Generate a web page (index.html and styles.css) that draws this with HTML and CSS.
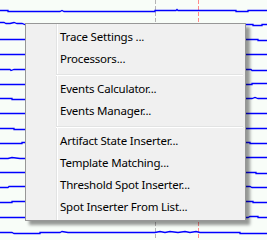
FILE: index.html
```html
<!DOCTYPE html>
<html>
<head>
<meta charset="utf-8">
<link rel="stylesheet" href="styles.css">
</head>
<body>
<div class="canvas">
  <svg class="traces" width="267" height="240" viewBox="0 0 267 240">
    <g class="markers">
      <line class="mk-gray" x1="155.5" y1="0" x2="155.5" y2="240"/>
      <line class="mk-red" x1="198.5" y1="0" x2="198.5" y2="240"/>
    </g>
    <g class="lines">
      <polyline points="0,10.5 8,10.5 8,11.5 60,11.5 62,10.5 64,11.5 155,11.5 155,10.5 176,10.5 177,9.5 178,10.5 236,10.5 236,11.5 248,11.5 248,10.5 267,10.5"/>
      <polyline points="0,22.5 4,22.5 6,23.5 10,23.5 14,22.5 17,23.5 22,23.5 25,24.5 253,24.5 253,25.5 262,25.5 262,24.5 267,24.5"/>
      <polyline points="0,39.5 25,39.5 250,39.5 258,39.5 258,40.5 267,40.5"/>
      <polyline points="0,54.5 25,54.5 267,54.5"/>
      <polyline points="0,69.5 10,69.5 11,70.5 14,69.5 25,69.5 251,69.5 252,70.5 267,70.5"/>
      <polyline points="0,84.5 25,84.5 245,84.5 252,84.5 252,83.5 267,83.5"/>
      <polyline points="0,98.5 12,98.5 12,99.5 25,99.5 252,98.5 255,97.5 258,98.5 267,98.5"/>
      <polyline points="0,113.5 25,113.5 267,113.5"/>
      <polyline points="0,128.5 14,128.5 14,129.5 25,129.5 258,128.5 267,128.5"/>
      <polyline points="0,143.5 22,143.5 22,142.5 25,142.5 250,142.5 250,143.5 267,143.5"/>
      <polyline points="0,158.5 8,158.5 12,157.5 20,158.5 25,158.5 252,157.5 267,157.5"/>
      <polyline points="0,172.5 25,172.5 256,172.5 256,173.5 267,173.5"/>
      <polyline points="0,187.5 8,187.5 9,186.5 25,186.5 250,186.5 252,187.5 267,187.5"/>
      <polyline points="0,202.5 12,202.5 12,201.5 25,201.5 253,201.5 253,202.5 267,202.5"/>
      <polyline points="0,217.5 25,217.5 248,217.5 250,216.5 258,216.5 258,217.5 267,217.5"/>
      <polyline points="0,232.5 12,232.5 14,233.5 40,233.5 40,232.5 60,232.5 62,231.5 68,232.5 155,232.5 160,231.5 165,232.5 170,231.5 178,232.5 185,231.5 190,232.5 196,231.5 200,232.5 220,232.5 240,232.5 240,233.5 267,233.5"/>
    </g>
  </svg>

  <div class="menu">
    <div class="item">Trace Settings ...</div>
    <div class="item">Processors...</div>
    <div class="sep"></div>
    <div class="item">Events Calculator...</div>
    <div class="item">Events Manager...</div>
    <div class="sep"></div>
    <div class="item">Artifact State Inserter...</div>
    <div class="item">Template Matching...</div>
    <div class="item">Threshold Spot Inserter...</div>
    <div class="item">Spot Inserter From List...</div>
  </div>
</div>
</body>
</html>
```

FILE: styles.css
```css
html, body {
  margin: 0;
  padding: 0;
}

body {
  width: 267px;
  height: 240px;
  overflow: hidden;
  background: #f8fdf8;
}

.canvas {
  position: relative;
  width: 267px;
  height: 240px;
}

.traces {
  position: absolute;
  left: 0;
  top: 0;
  display: block;
}

.lines polyline {
  fill: none;
  stroke: #0000ff;
  stroke-width: 1.3;
}

.mk-gray {
  stroke: #b4b4b4;
  stroke-width: 1;
  stroke-dasharray: 4 2;
}

.mk-red {
  stroke: #ff8a8a;
  stroke-width: 1;
  stroke-dasharray: 4 2;
}

.menu {
  position: absolute;
  left: 25px;
  top: 23px;
  width: 221px;
  height: 198px;
  box-sizing: border-box;
  border: 1px solid #979797;
  padding: 2px;
  background-color: #f0f0f0;
  background-image: linear-gradient(to right,
    transparent 30px, #e2e3e3 30px, #e2e3e3 31px,
    #ffffff 31px, #ffffff 32px, transparent 32px);
  box-shadow: 4px 4px 3px rgba(0, 0, 0, 0.4);
  display: flex;
  flex-direction: column;
  font-family: "Noto Sans", "Open Sans", sans-serif;
  font-size: 11.5px;
  letter-spacing: -0.2px;
  color: #000;
}

.item {
  height: 22px;
  line-height: 22px;
  padding-left: 32px;
  white-space: nowrap;
}

.sep {
  height: 8px;
  margin-left: 28px;
  background-image: linear-gradient(to bottom,
    transparent 4px, #e2e3e3 4px, #e2e3e3 5px,
    #ffffff 5px, #ffffff 6px, transparent 6px);
}
```
